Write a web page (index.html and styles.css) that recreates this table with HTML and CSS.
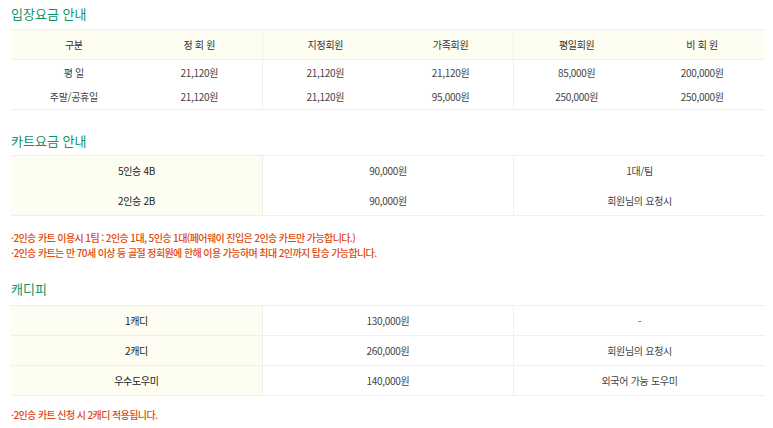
FILE: index.html
```html
<!DOCTYPE html>
<html lang="ko">
<head>
<meta charset="utf-8">
<link rel="stylesheet" href="styles.css">
</head>
<body>
<div class="page">
  <section class="sec sec-fee">
    <h2 class="title">입장요금 안내</h2>
    <table class="tbl fee">
      <thead>
        <tr>
          <th>구분</th><th class="div">정 회 원</th><th>지정회원</th><th class="div">가족회원</th><th>평일회원</th><th>비 회 원</th>
        </tr>
      </thead>
      <tbody>
        <tr><td>평 일</td><td class="div">21,120원</td><td>21,120원</td><td class="div">21,120원</td><td>85,000원</td><td>200,000원</td></tr>
        <tr><td>주말/공휴일</td><td class="div">21,120원</td><td>21,120원</td><td class="div">95,000원</td><td>250,000원</td><td>250,000원</td></tr>
      </tbody>
    </table>
  </section>

  <section class="sec sec-cart">
    <h2 class="title">카트요금 안내</h2>
    <table class="tbl side">
      <tbody>
        <tr><th>5인승 4B</th><td class="div">90,000원</td><td>1대/팀</td></tr>
        <tr><th>2인승 2B</th><td class="div">90,000원</td><td>회원님의 요청시</td></tr>
      </tbody>
    </table>
    <ul class="notes">
      <li>·2인승 카트 이용시 1팀 : 2인승 1대, 5인승 1대(페어웨이 진입은 2인승 카트만 가능합니다.)</li>
      <li>·2인승 카트는 만 70세 이상 등 골절 정회원에 한해 이용 가능하며 최대 2인까지 탑승 가능합니다.</li>
    </ul>
  </section>

  <section class="sec sec-caddie">
    <h2 class="title">캐디피</h2>
    <table class="tbl side lined">
      <tbody>
        <tr><th>1캐디</th><td class="div">130,000원</td><td>-</td></tr>
        <tr><th>2캐디</th><td class="div">260,000원</td><td>회원님의 요청시</td></tr>
        <tr><th>우수도우미</th><td class="div">140,000원</td><td>외국어 가능 도우미</td></tr>
      </tbody>
    </table>
    <ul class="notes notes-last">
      <li>·2인승 카트 신청 시 2캐디 적용됩니다.</li>
    </ul>
  </section>
</div>
</body>
</html>
```
FILE: styles.css
```css
* { box-sizing: border-box; }
html, body { margin: 0; padding: 0; background: #fff; }
body {
  font-family: "Noto Sans CJK KR", "Noto Sans", sans-serif;
  color: #444;
  font-size: 10px;
}
.page { padding: 4px 8px 0 11px; }
.title {
  margin: 0;
  font-size: 13px;
  line-height: 20px;
  font-weight: 400;
  color: #0b9468;
}
.tbl {
  width: 100%;
  border-collapse: collapse;
  table-layout: fixed;
  border-top: 1px solid #f1f0e4;
  border-bottom: 1px solid #f1f0e4;
}
.tbl th, .tbl td {
  padding: 0;
  text-align: center;
  font-weight: 400;
  letter-spacing: -0.3px;
}
.tbl .div { border-right: 1px solid #f3f2e6; }

.sec-fee .tbl { margin-top: 5px; }
.fee thead th {
  background: #fdfdf2;
  height: 30px;
  color: #333;
  border-bottom: 1px solid #f1f0e4;
}
.fee tbody td { height: 25px; color: #444; }

.sec-cart { margin-top: 21px; }
.sec-cart .tbl { margin-top: 4px; }
.side th {
  background: #fdfdf2;
  color: #222;
  border-right: 1px solid #efeee2;
}
.side td { color: #444; }
.side th, .side td { height: 30px; }
.lined tr + tr th, .lined tr + tr td { border-top: 1px solid #f1f0e4; }

.sec-caddie { margin-top: 19px; }
.sec-caddie .tbl { margin-top: 6px; }

.notes {
  list-style: none;
  margin: 14px 0 0;
  padding: 0;
  color: #e0480a;
  font-size: 10px;
  line-height: 15px;
  letter-spacing: -0.6px;
  font-weight: 500;
}
.notes-last { margin-top: 11px; }
```
